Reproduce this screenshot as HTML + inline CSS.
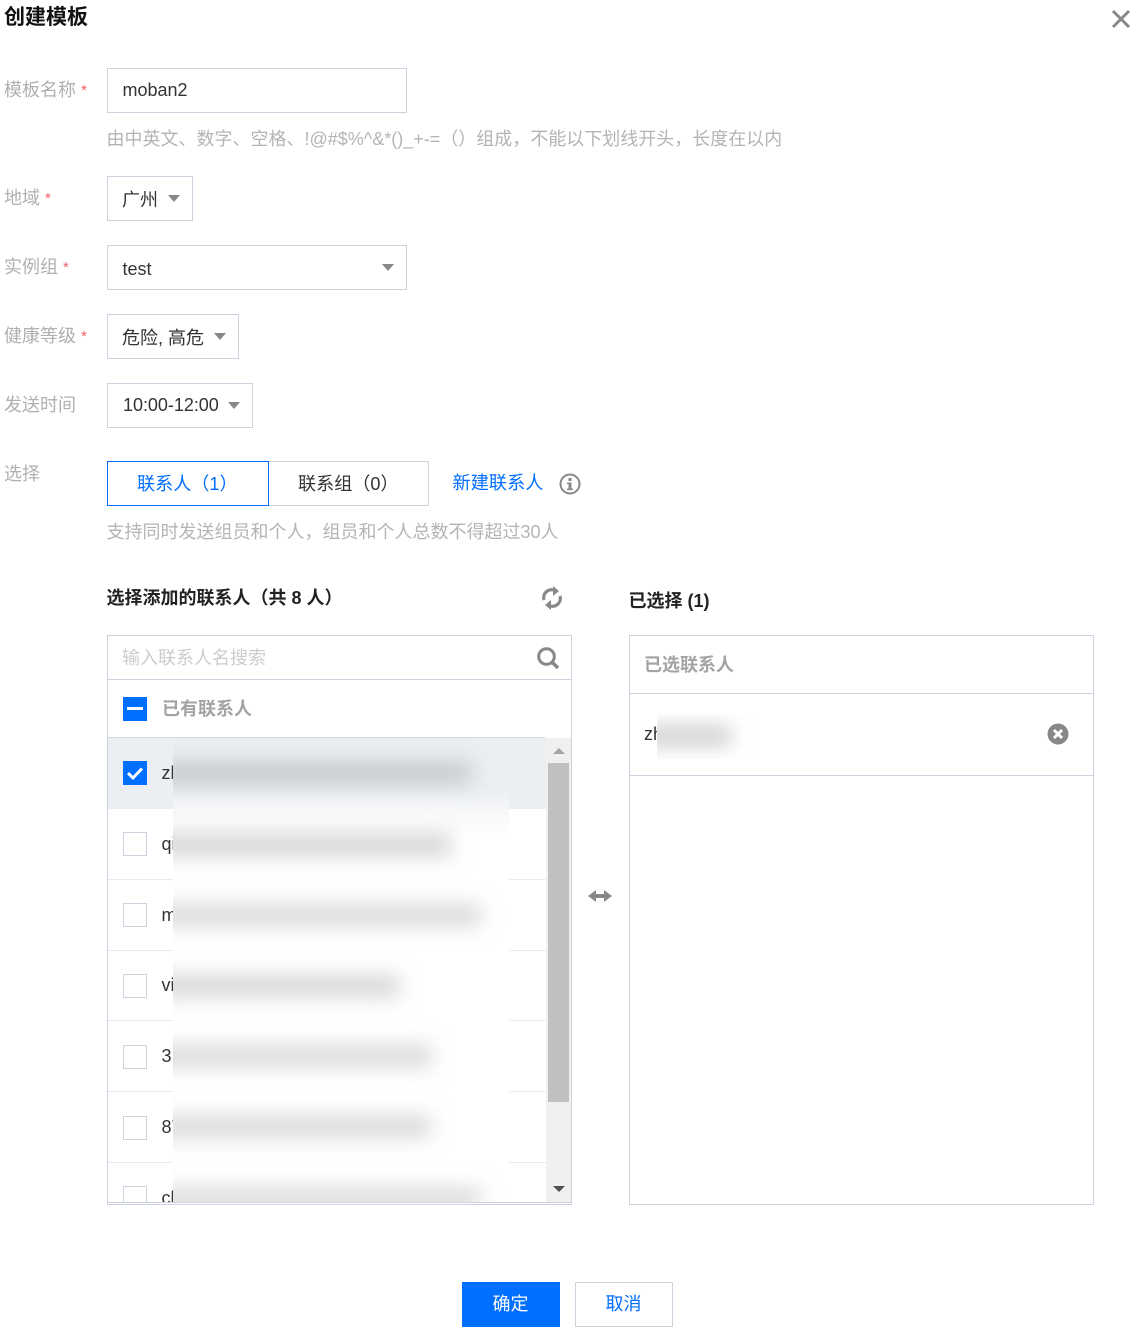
<!DOCTYPE html>
<html lang="zh-CN"><head><meta charset="utf-8"><title>创建模板</title>
<style>
html,body{margin:0;padding:0;background:#fff}
#p{position:relative;width:1139px;height:1330px;overflow:hidden;background:#fff;font:18px/26px "Liberation Sans","Noto Sans CJK SC",sans-serif;color:#333}
.t{position:absolute;white-space:nowrap}
.b{position:absolute;box-sizing:border-box;border:1px solid #ccd2de;background:#fff}
.l{color:#b0b0b0}
.h{color:#b4b4b4}
.r{position:absolute;color:#f0606a;font-size:15px}
.a{position:absolute;width:0;height:0;border-left:6px solid transparent;border-right:6px solid transparent;border-top:7px solid #888}
.c{position:absolute;box-sizing:border-box;width:24px;height:24px;border:1px solid #ccd2de;background:#fff;left:123px}
.ln{position:absolute;height:1px;background:#e8eaef}
.bl{position:absolute;height:22px;filter:blur(10px)}
</style></head><body><div id="p">
<div class="t" style="left:4px;top:5px;font-size:21px;font-weight:bold;color:#111">创建模板</div>
<svg style="position:absolute;left:1110px;top:8px" width="22" height="22"><path d="M3 3L19 19M19 3L3 19" stroke="#888" stroke-width="3"/></svg>

<div class="t l" style="left:4px;top:77px">模板名称</div><div class="t r" style="left:81px;top:78px">*</div>
<div class="b" style="left:107px;top:68px;width:300px;height:45px"></div>
<div class="t" style="left:122.5px;top:77px">moban2</div>
<div class="t h" style="left:106.5px;top:126px">由中英文、数字、空格、!@#$%^&amp;*()_+-=（）组成，不能以下划线开头，长度在以内</div>

<div class="t l" style="left:4px;top:185px">地域</div><div class="t r" style="left:45px;top:186px">*</div>
<div class="b" style="left:107px;top:176px;width:86px;height:45px"></div>
<div class="t" style="left:122px;top:187px">广州</div><div class="a" style="left:168px;top:195px"></div>

<div class="t l" style="left:4px;top:254px">实例组</div><div class="t r" style="left:63px;top:255px">*</div>
<div class="b" style="left:107px;top:245px;width:300px;height:45px"></div>
<div class="t" style="left:122.5px;top:256px">test</div><div class="a" style="left:382px;top:264px"></div>

<div class="t l" style="left:4px;top:323px">健康等级</div><div class="t r" style="left:81px;top:324px">*</div>
<div class="b" style="left:107px;top:314px;width:132px;height:45px"></div>
<div class="t" style="left:122px;top:325px">危险, 高危</div><div class="a" style="left:214px;top:333px"></div>

<div class="t l" style="left:4px;top:392px">发送时间</div>
<div class="b" style="left:107px;top:383px;width:146px;height:45px"></div>
<div class="t" style="left:123px;top:392px;letter-spacing:-.03px">10:00-12:00</div><div class="a" style="left:228px;top:402px"></div>

<div class="t l" style="left:4px;top:461px">选择</div>
<div class="b" style="left:268px;top:461px;width:161px;height:45px"></div>
<div class="b" style="left:107px;top:461px;width:162px;height:45px;border-color:#006eff"></div>
<div class="t" style="left:137px;top:471px;color:#006eff;font-size:18.1px">联系人（1）</div>
<div class="t" style="left:298px;top:471px;font-size:18.1px">联系组（0）</div>
<div class="t" style="left:452.5px;top:470px;color:#006eff;font-size:18.2px">新建联系人</div>
<svg style="position:absolute;left:559px;top:473px" width="22" height="22"><circle cx="11" cy="11" r="9.5" fill="none" stroke="#888" stroke-width="2"/><rect x="9.5" y="9.5" width="3" height="7.5" fill="#888"/><rect x="8" y="9.5" width="3" height="1.6" fill="#888"/><rect x="8" y="15.5" width="6" height="1.6" fill="#888"/><rect x="9.5" y="5" width="3" height="3" fill="#888"/></svg>
<div class="t h" style="left:106.5px;top:519px">支持同时发送组员和个人，组员和个人总数不得超过30人</div>

<div class="t" style="left:106.5px;top:585px;font-weight:bold;color:#222">选择添加的联系人（共 8 人）</div>
<svg style="position:absolute;left:540px;top:585px" width="24" height="26" viewBox="0 0 24 26"><path d="M4 15A8 8 0 0 1 16 6M20 11A8 8 0 0 1 8 20" fill="none" stroke="#888" stroke-width="3.2"/><path d="M13 1L13 11L19 6ZM11 15L11 25L5 20Z" fill="#888"/></svg>

<div class="b" style="left:107px;top:635px;width:465px;height:570px"></div>
<div class="t" style="left:122px;top:645px;color:#ccc">输入联系人名搜索</div>
<svg style="position:absolute;left:536px;top:646px" width="24" height="24"><circle cx="10.5" cy="10.5" r="7.8" fill="none" stroke="#888" stroke-width="3"/><path d="M16 16L22 22" stroke="#888" stroke-width="3.4"/></svg>
<div class="ln" style="left:108px;top:679px;width:463px;background:#ccd2de"></div>
<div class="c" style="top:697px;background:#006eff;border:0"></div>
<div style="position:absolute;left:127px;top:707px;width:16px;height:3px;background:#fff"></div>
<div class="t" style="left:162px;top:696px;font-weight:bold;color:#a3a3a3">已有联系人</div>
<div class="ln" style="left:108px;top:737px;width:437px;background:#d5d8de"></div>

<div style="position:absolute;left:108px;top:738px;width:438px;height:71px;background:#ebeef2"></div>
<div class="ln" style="left:108px;top:879px;width:438px"></div>
<div class="ln" style="left:108px;top:950px;width:438px"></div>
<div class="ln" style="left:108px;top:1020px;width:438px"></div>
<div class="ln" style="left:108px;top:1091px;width:438px"></div>
<div class="ln" style="left:108px;top:1162px;width:438px"></div>

<div class="c" style="top:761px;background:#006eff;border:0"></div>
<svg style="position:absolute;left:123px;top:761px" width="24" height="24"><path d="M5 12L10 17L19 7.5" fill="none" stroke="#fff" stroke-width="3"/></svg>
<div class="c" style="top:832px"></div>
<div class="c" style="top:903px"></div>
<div class="c" style="top:974px"></div>
<div class="c" style="top:1045px"></div>
<div class="c" style="top:1116px"></div>
<div class="c" style="top:1186px;height:16px;border-bottom:0"></div>

<div class="t" style="left:161.5px;top:760px">zh</div>
<div class="t" style="left:161.5px;top:831px">qi</div>
<div class="t" style="left:161.5px;top:902px">m</div>
<div class="t" style="left:161.5px;top:972px">vi</div>
<div class="t" style="left:161.5px;top:1043px">3</div>
<div class="t" style="left:161.5px;top:1114px">87</div>
<div class="t" style="left:161.5px;top:1185px">cl</div>
<div style="position:absolute;left:108px;top:1203px;width:463px;height:1px;background:#fff"></div>

<div style="position:absolute;left:173px;top:738px;width:336px;height:464px;overflow:hidden;background:linear-gradient(#ebeef2 0,#ebeef2 50px,#f9fafb 80px,#fff 100px)">
<div class="bl" style="left:-20px;top:24px;width:318px;background:#c6c9cc"></div>
<div class="bl" style="left:-20px;top:96px;width:298px;background:#d4d4d4"></div>
<div class="bl" style="left:-20px;top:166px;width:328px;background:#dadada"></div>
<div class="bl" style="left:-20px;top:237px;width:246px;background:#d6d6d6"></div>
<div class="bl" style="left:-20px;top:307px;width:278px;background:#d9d9d9"></div>
<div class="bl" style="left:-20px;top:378px;width:278px;background:#d9d9d9"></div>
<div class="bl" style="left:-20px;top:450px;width:328px;background:#dadada"></div>
</div>

<div style="position:absolute;left:546px;top:738px;width:25px;height:464px;background:#f0f0f0"></div>
<div style="position:absolute;left:548px;top:763px;width:21px;height:339px;background:#c0c0c0"></div>
<div class="a" style="left:553px;top:748px;border-top:0;border-bottom:6px solid #a5a5a5"></div>
<div class="a" style="left:553px;top:1186px;border-top:6px solid #505050"></div>
<div class="ln" style="left:108px;top:1202px;width:463px;background:#ccd2de"></div>

<svg style="position:absolute;left:587px;top:887px" width="26" height="18"><path d="M1 9L9 3V7H17V3L25 9L17 15V11H9V15Z" fill="#888"/></svg>

<div class="t" style="left:628.5px;top:588px;font-weight:bold;color:#222">已选择 (1)</div>
<div class="b" style="left:629px;top:635px;width:465px;height:570px"></div>
<div class="t" style="left:644px;top:652px;font-weight:bold;color:#a3a3a3">已选联系人</div>
<div class="ln" style="left:630px;top:693px;width:463px;background:#ccd2de"></div>
<div class="t" style="left:644px;top:721px">zh</div>
<div style="position:absolute;left:657px;top:714px;width:110px;height:45px;overflow:hidden;background:#fff"><div class="bl" style="left:-14px;top:12px;width:88px;height:20px;background:#cdcdcd"></div></div>
<svg style="position:absolute;left:1047px;top:723px" width="22" height="22"><circle cx="11" cy="11" r="10.5" fill="#888"/><path d="M7 7L15 15M15 7L7 15" stroke="#fff" stroke-width="3"/></svg>
<div class="ln" style="left:630px;top:775px;width:463px;background:#ccd2de"></div>

<div style="position:absolute;left:462px;top:1282px;width:98px;height:45px;background:#006eff;color:#fff;text-align:center;line-height:44px;text-indent:-1px">确定</div>
<div class="b" style="left:575px;top:1282px;width:98px;height:45px;color:#006eff;text-align:center;line-height:43px;text-indent:-1px">取消</div>
</div></body></html>
